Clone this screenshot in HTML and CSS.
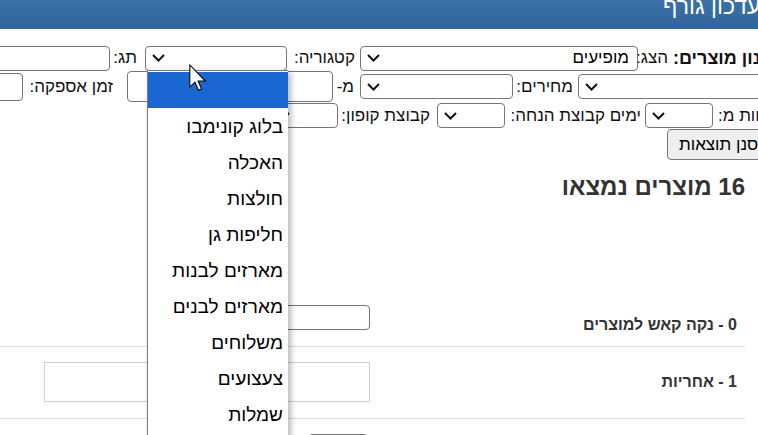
FILE: index.html
```html
<!DOCTYPE html>
<html lang="he" dir="rtl">
<head>
<meta charset="utf-8">
<title>עדכון גורף</title>
<link rel="stylesheet" href="styles.css">
</head>
<body>
<header class="topbar"><h1 class="title">עדכון גורף</h1></header>

<form class="filters">
  <div class="row r1">
    <span class="lbl lbl-main">סינון מוצרים:</span>
    <span class="lbl w35 pr5">הצג:</span>
    <div class="sel w278"><span class="val">מופיעים</span><svg class="chev" viewBox="0 0 13 8"><polyline points="1,1 6.5,6.5 12,1"/></svg></div>
    <span class="lbl w73 pr5">קטגוריה:</span>
    <div class="sel w142 open">
      <span class="val"></span><svg class="chev" viewBox="0 0 13 8"><polyline points="1,1 6.5,6.5 12,1"/></svg>
      <ul class="listbox">
        <li class="opt active"></li>
        <li class="opt">בלוג קונימבו</li>
        <li class="opt">האכלה</li>
        <li class="opt">חולצות</li>
        <li class="opt">חליפות גן</li>
        <li class="opt">מארזים לבנות</li>
        <li class="opt">מארזים לבנים</li>
        <li class="opt">משלוחים</li>
        <li class="opt">צעצועים</li>
        <li class="opt">שמלות</li>
      </ul>
    </div>
    <span class="lbl w35 pr8">תג:</span>
    <div class="inp w200 h25"></div>
  </div>

  <div class="row r2">
    <div class="sel w222 h26"><span class="val"></span><svg class="chev" viewBox="0 0 13 8"><polyline points="1,1 6.5,6.5 12,1"/></svg></div>
    <span class="lbl w65 pr5">מחירים:</span>
    <div class="sel w153 h27"><span class="val"></span><svg class="chev" viewBox="0 0 13 8"><polyline points="1,1 6.5,6.5 12,1"/></svg></div>
    <span class="lbl w27 pr6">מ-</span>
    <div class="inp w206 h31"></div>
    <span class="lbl w104 pr14">זמן אספקה:</span>
    <div class="inp w100 h28"></div>
  </div>

  <div class="row r3">
    <span class="lbl lbl-cut">לקוחות מ:</span>
    <div class="sel w68"><span class="val"></span><svg class="chev" viewBox="0 0 13 8"><polyline points="1,1 6.5,6.5 12,1"/></svg></div>
    <span class="lbl w140 pr4">ימים קבוצת הנחה:</span>
    <div class="sel w68"><span class="val"></span><svg class="chev" viewBox="0 0 13 8"><polyline points="1,1 6.5,6.5 12,1"/></svg></div>
    <span class="lbl w99 pr7">קבוצת קופון:</span>
    <div class="sel w68"><span class="val"></span><svg class="chev" viewBox="0 0 13 8"><polyline points="1,1 6.5,6.5 12,1"/></svg></div>
  </div>

  <div class="row r4">
    <button type="button" class="btn">סנן תוצאות</button>
  </div>
</form>

<h2 class="found">16 מוצרים נמצאו</h2>

<div class="list">
  <div class="item">
    <div class="item-label">0 - נקה קאש למוצרים</div>
    <div class="item-ctrl"><div class="inp w170 h25"></div></div>
  </div>
  <div class="item">
    <div class="item-label">1 - אחריות</div>
    <div class="item-ctrl"><div class="area"></div></div>
  </div>
  <div class="item">
    <div class="item-label">2 - מבצע</div>
    <div class="item-ctrl"><div class="sel w60 bottom-sel"></div></div>
  </div>
</div>

<svg class="cursor" width="18" height="28" viewBox="0 0 13 20"><path d="M0.6 0.6 L0.6 16.6 L4.3 13 L6.8 18.9 L9.1 17.9 L6.6 12.2 L11.8 12.2 Z"/></svg>
</body>
</html>
```

FILE: styles.css
```css
* { box-sizing: border-box; }
html, body { margin: 0; padding: 0; }
body {
  width: 758px;
  height: 435px;
  overflow: hidden;
  position: relative;
  direction: rtl;
  background: #fff;
  color: #000;
  font-family: "Liberation Sans", Arial, "DejaVu Sans", sans-serif;
  font-size: 17px;
}

.topbar {
  height: 29px;
  display: flex;
  overflow: hidden;
  background: linear-gradient(#3b70a8, #31659a);
}
.title {
  flex-shrink: 0;
  margin: -5px -52px 0 0;
  width: 147px;
  text-align: left;
  font-family: "Liberation Sans", Arial, sans-serif;
  font-size: 23px;
  line-height: 22px;
  font-weight: normal;
  color: #fff;
  white-space: nowrap;
}

.filters { margin: 16px 0 0 0; }
.row {
  display: flex;
  align-items: center;
  margin-right: -42px;
  white-space: nowrap;
}
.row > * { flex-shrink: 0; }
.r1 { height: 26px; }
.r2 { height: 31px; }
.r3 { height: 27px; }
.r4 { height: 31px; }

.lbl { display: block; text-align: right; font-size: 17px; line-height: 20px; color: #111; }
.lbl-main { width: 127px; text-align: left; font-weight: bold; font-size: 18px; overflow: hidden; }
.lbl-cut { width: 87px; text-align: left; padding-left: 5px; overflow: hidden; }

.w27 { width: 27px; } .w35 { width: 35px; } .w60 { width: 60px; } .w65 { width: 65px; }
.w68 { width: 68px; } .w73 { width: 73px; } .w99 { width: 99px; } .w100 { width: 100px; }
.w104 { width: 104px; } .w140 { width: 140px; } .w142 { width: 142px; } .w153 { width: 153px; }
.w170 { width: 170px; } .w200 { width: 200px; } .w206 { width: 206px; } .w222 { width: 222px; }
.w278 { width: 278px; }
.pr4 { padding-right: 4px; } .pr5 { padding-right: 5px; } .pr6 { padding-right: 6px; }
.pr7 { padding-right: 7px; } .pr8 { padding-right: 8px; } .pr14 { padding-right: 14px; }
.h25 { height: 25px; } .h26 { height: 26px; } .h27 { height: 27px; } .h28 { height: 28px; } .h31 { height: 31px; }

.sel {
  position: relative;
  height: 25px;
  display: flex;
  align-items: center;
  justify-content: space-between;
  padding: 0 8px 0 6px;
  background: #fff;
  border: 1px solid #767676;
  border-radius: 4px;
}
.sel .val { font-size: 17px; line-height: 20px; color: #000; }
.chev { width: 13px; height: 8px; display: block; }
.chev polyline { fill: none; stroke: #111; stroke-width: 2; }

.inp {
  background: #fff;
  border: 1px solid #767676;
  border-radius: 4px;
}

.btn {
  width: 133px;
  height: 31px;
  text-align: left;
  padding: 0 0 0 11px;
  font-family: inherit;
  font-size: 17px;
  color: #000;
  background: #efefef;
  border: 1px solid #767676;
  border-radius: 4px;
  white-space: nowrap;
  overflow: hidden;
}

.listbox {
  position: absolute;
  top: 23px;
  left: 1px;
  width: 141px;
  height: 380px;
  margin: 0;
  padding: 1px 0 0 0;
  list-style: none;
  background: #fff;
  border-top: 1px solid #7a7a7a;
  border-left: 1px solid #7a7a7a;
  box-shadow: 3px 2px 6px rgba(0, 0, 0, 0.28);
  z-index: 5;
}
.opt {
  height: 36px;
  line-height: 38px;
  padding-right: 5px;
  font-size: 19px;
  color: #000;
  white-space: nowrap;
}
.opt.active { background: #1a67d2; }

.found {
  margin: 13px 13px 0 0;
  font-size: 24px;
  line-height: 28px;
  font-weight: bold;
  color: #333;
}

.list {
  margin: 89px 13px 0 0;
  width: 745px;
}
.item {
  display: flex;
  padding: 15px 0 16px 0;
  border-bottom: 1px solid #dedede;
}
.item-label {
  flex-shrink: 0;
  width: 375px;
  padding: 10px 8px 0 0;
  margin-bottom: -10px;
  font-size: 16px;
  line-height: 20px;
  font-weight: bold;
  color: #333;
}
.item-ctrl { display: flex; }
.area {
  width: 326px;
  height: 40px;
  border: 1px solid #cfcfcf;
  background: #fff;
}
.bottom-sel { margin-right: 2px; }

.cursor {
  position: absolute;
  left: 189px;
  top: 64px;
  z-index: 10;
}
.cursor path { fill: #fff; stroke: #000; stroke-width: 0.75; stroke-linejoin: miter; }
```
